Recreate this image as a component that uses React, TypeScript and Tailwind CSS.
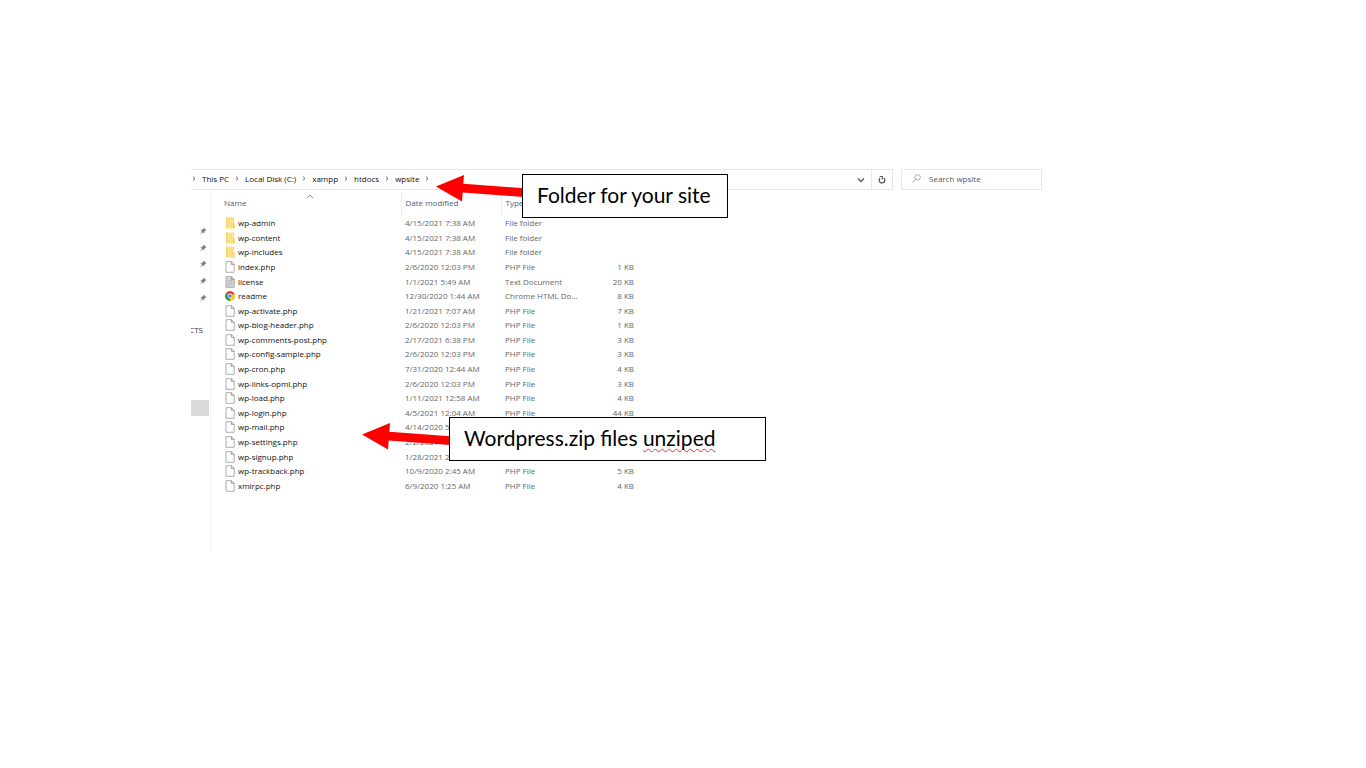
import type { ReactNode } from "react";

type FileKind = "folder" | "php" | "text" | "chrome";

type FileRow = {
  name: string;
  kind: FileKind;
  modified: string;
  type: string;
  size?: string;
};

const crumbs = ["This PC", "Local Disk (C:)", "xampp", "htdocs", "wpsite"];

const files: FileRow[] = [
  { name: "wp-admin", kind: "folder", modified: "4/15/2021 7:38 AM", type: "File folder" },
  { name: "wp-content", kind: "folder", modified: "4/15/2021 7:38 AM", type: "File folder" },
  { name: "wp-includes", kind: "folder", modified: "4/15/2021 7:38 AM", type: "File folder" },
  { name: "index.php", kind: "php", modified: "2/6/2020 12:03 PM", type: "PHP File", size: "1 KB" },
  { name: "license", kind: "text", modified: "1/1/2021 5:49 AM", type: "Text Document", size: "20 KB" },
  { name: "readme", kind: "chrome", modified: "12/30/2020 1:44 AM", type: "Chrome HTML Do...", size: "8 KB" },
  { name: "wp-activate.php", kind: "php", modified: "1/21/2021 7:07 AM", type: "PHP File", size: "7 KB" },
  { name: "wp-blog-header.php", kind: "php", modified: "2/6/2020 12:03 PM", type: "PHP File", size: "1 KB" },
  { name: "wp-comments-post.php", kind: "php", modified: "2/17/2021 6:38 PM", type: "PHP File", size: "3 KB" },
  { name: "wp-config-sample.php", kind: "php", modified: "2/6/2020 12:03 PM", type: "PHP File", size: "3 KB" },
  { name: "wp-cron.php", kind: "php", modified: "7/31/2020 12:44 AM", type: "PHP File", size: "4 KB" },
  { name: "wp-links-opml.php", kind: "php", modified: "2/6/2020 12:03 PM", type: "PHP File", size: "3 KB" },
  { name: "wp-load.php", kind: "php", modified: "1/11/2021 12:58 AM", type: "PHP File", size: "4 KB" },
  { name: "wp-login.php", kind: "php", modified: "4/5/2021 12:04 AM", type: "PHP File", size: "44 KB" },
  { name: "wp-mail.php", kind: "php", modified: "4/14/2020 5:", type: "" },
  { name: "wp-settings.php", kind: "php", modified: "2/2/2021", type: "" },
  { name: "wp-signup.php", kind: "php", modified: "1/28/2021 2:", type: "" },
  { name: "wp-trackback.php", kind: "php", modified: "10/9/2020 2:45 AM", type: "PHP File", size: "5 KB" },
  { name: "xmlrpc.php", kind: "php", modified: "6/9/2020 1:25 AM", type: "PHP File", size: "4 KB" },
];

function FileIcon({ kind }: { kind: FileKind }) {
  if (kind === "folder") {
    return (
      <svg className="h-3 w-[10px] shrink-0" viewBox="0 0 10 12" aria-hidden="true">
        <path d="M1 .5h7.6l.6 1v10H1z" fill="#fbdf86" />
        <path d="M8 6.5H9.6v5H8z" fill="#f2cd62" />
        <path d="M1 .5h1v11H1z" fill="#f5d271" />
      </svg>
    );
  }

  if (kind === "chrome") {
    return (
      <svg className="h-3 w-[10px] shrink-0" viewBox="0 0 10 12" aria-hidden="true">
        <path d="M5 6 .7 3.5A5 5 0 0 1 9.3 3.5L9.3 4.2z" fill="#e2392c" />
        <path d="M5 6 9.3 3.5A5 5 0 0 1 5 11z" fill="#fbc116" />
        <path d="M5 6 5 11A5 5 0 0 1 .7 3.5z" fill="#279847" />
        <circle cx="5" cy="6" r="2.4" fill="#fff" />
        <circle cx="5" cy="6" r="1.8" fill="#4285e8" />
      </svg>
    );
  }

  return (
    <svg className="h-3 w-[10px] shrink-0" viewBox="0 0 10 12" aria-hidden="true">
      <path
        d="M1 .7h5.6L9.2 3.2v8.1H1z"
        fill={kind === "text" ? "#dadada" : "#fdfdfd"}
        stroke="#9a9a9a"
        strokeWidth=".8"
      />
      <path d="M6.4.7v2.7h2.8" fill="none" stroke="#8a8a8a" strokeWidth=".8" />
      {kind === "text" && (
        <path d="M2.5 4.5h5M2.5 6h5M2.5 7.5h5M2.5 9h5" stroke="#a8a8a8" strokeWidth=".6" />
      )}
    </svg>
  );
}

function PinIcon() {
  return (
    <svg className="h-2 w-2" viewBox="0 0 8 8" aria-hidden="true">
      <path
        d="M4.6.6 7.4 3.3 6.6 3.6 5.4 4.8 5.2 6.6 3.6 5.3 1 7.4 2.8 4.5 1.5 3 3.4 2.8 4.5 1.6z"
        fill="#76828c"
      />
    </svg>
  );
}

function Chevron() {
  return (
    <svg className="h-[5px] w-1 shrink-0" viewBox="0 0 4 5" aria-hidden="true">
      <path d="M1 .7 3 2.5 1 4.3" fill="none" stroke="#555" strokeWidth=".9" />
    </svg>
  );
}

function ArrowLeft({ className }: { className: string }) {
  return (
    <svg className={`absolute h-7 w-[88px] ${className}`} viewBox="0 0 88 28" aria-hidden="true">
      <path d="M0 11.4 28 .1 27.3 8.8 88 13.3V22L26.7 17.5 26 26.5z" fill="#fe0000" />
    </svg>
  );
}

function Callout({ className, children }: { className: string; children: ReactNode }) {
  return (
    <div
      className={`absolute flex h-11 items-center border border-black bg-white pb-[2px] pl-[14px] font-[Lato,sans-serif] text-[21px] whitespace-nowrap text-black ${className}`}
    >
      <p>{children}</p>
    </div>
  );
}

export default function App() {
  return (
    <div className="min-h-screen bg-white pt-[169px] pr-[324px] pl-[191px] font-['Open_Sans','Noto_Sans',sans-serif] text-[8px] leading-[12px] text-[#111]">
      <main className="relative">
        <header className="flex gap-2">
          <nav
            aria-label="Address"
            className="flex h-[21px] flex-1 items-center border border-l-0 border-[#e6e6e6]"
          >
            <ol className="flex flex-1 items-center pb-[2px]">
              <li className="flex w-[11px] pl-[1px]">
                <Chevron />
              </li>
              {crumbs.map((crumb) => (
                <li key={crumb} className="flex items-center gap-[6px] pr-[6px]">
                  <a href="#">{crumb}</a>
                  <Chevron />
                </li>
              ))}
            </ol>
            <button type="button" aria-label="Previous locations" className="flex h-full w-5 items-center justify-center">
              <svg className="h-[6px] w-2" viewBox="0 0 8 6" aria-hidden="true">
                <path d="M1 1.5 4 4.5 7 1.5" fill="none" stroke="#555" strokeWidth="1.3" />
              </svg>
            </button>
            <button
              type="button"
              aria-label="Refresh"
              className="flex h-full w-[21px] items-center justify-center border-l border-[#e6e6e6]"
            >
              <svg className="h-[9px] w-2" viewBox="0 0 8 9" aria-hidden="true">
                <path d="M5.8 3A2.8 2.8 0 1 1 2 3.2" fill="none" stroke="#555" strokeWidth="1.3" />
                <path d="M1.6 1.2 4.6 1.6 4 4.4" fill="none" stroke="#555" strokeWidth="1.1" />
              </svg>
            </button>
          </nav>

          <label className="flex h-[21px] w-[141px] items-center gap-2 border border-[#e6e6e6] pb-[2px] pl-[10px]">
            <svg className="h-[9px] w-[9px] shrink-0" viewBox="0 0 9 9" aria-hidden="true">
              <circle cx="5.6" cy="3.3" r="2.7" fill="none" stroke="#999" strokeWidth=".8" />
              <path d="M3.6 5.3.6 8.4" stroke="#999" strokeWidth=".9" />
            </svg>
            <input
              type="search"
              aria-label="Search wpsite"
              placeholder="Search wpsite"
              className="w-full min-w-0 outline-none placeholder:text-[#555]"
            />
          </label>
        </header>

        <div className="flex">
          <aside className="h-[362px] w-[20px] shrink-0 border-r border-[#f3f3f3] pt-[33px]">
            <ul className="flex h-[83px] flex-col">
              {[1, 2, 3, 4, 5].map((pin) => (
                <li key={pin} className="flex flex-1 items-center pl-2">
                  <PinIcon />
                </li>
              ))}
            </ul>
            {/* Tail of a section heading, the rest is scrolled out to the left */}
            <div className="mt-[18px] flex w-3 justify-end overflow-hidden text-[#333]">CTS</div>
            <div className="mt-16 h-4 w-[18px] bg-[#d9d9d9]" />
          </aside>

          <table className="mt-[3px] h-[300px] w-[424px] table-fixed border-collapse text-left text-[#666]">
            <colgroup>
              <col className="w-[190px]" />
              <col className="w-[100px]" />
              <col className="w-[90px]" />
              <col />
            </colgroup>
            <thead className="text-[#4c607a]">
              <tr className="h-[23px]">
                <th className="relative p-0 pb-1 pl-[13px] font-normal" aria-sort="ascending">
                  Name
                  <svg className="absolute top-[1px] left-[95px] h-[5px] w-2" viewBox="0 0 8 5" aria-hidden="true">
                    <path d="M1 4 4 1.2 7 4" fill="none" stroke="#888" strokeWidth=".9" />
                  </svg>
                </th>
                <th className="border-l border-[#ececec] p-0 pb-1 pl-1 font-normal">Date modified</th>
                <th className="border-l border-[#ececec] p-0 pb-1 pl-1 font-normal">Type</th>
                <th className="p-0" />
              </tr>
            </thead>
            <tbody>
              {files.map((file) => (
                <tr key={file.name}>
                  <td className="p-0 pl-[14px]">
                    <div className="flex items-center gap-[3px] text-[#111]">
                      <FileIcon kind={file.kind} />
                      {file.name}
                    </div>
                  </td>
                  <td className="p-0 pl-1 whitespace-nowrap">{file.modified}</td>
                  <td className="p-0 pl-1 whitespace-nowrap">{file.type}</td>
                  <td className="p-0 pr-px text-right whitespace-nowrap">{file.size}</td>
                </tr>
              ))}
            </tbody>
          </table>
        </div>

        {/* Annotations lie over the file list */}
        <ArrowLeft className="top-[6px] left-[245px]" />
        <Callout className="top-[5px] left-[331px] w-[206px]">Folder for your site</Callout>
        <ArrowLeft className="top-[254px] left-[171px]" />
        <Callout className="top-[248px] left-[258px] w-[317px]">
          Wordpress.zip files{" "}
          <span className="underline decoration-[#e33] decoration-wavy decoration-1 underline-offset-2 [text-decoration-skip-ink:none]">
            unziped
          </span>
        </Callout>
      </main>
    </div>
  );
}
